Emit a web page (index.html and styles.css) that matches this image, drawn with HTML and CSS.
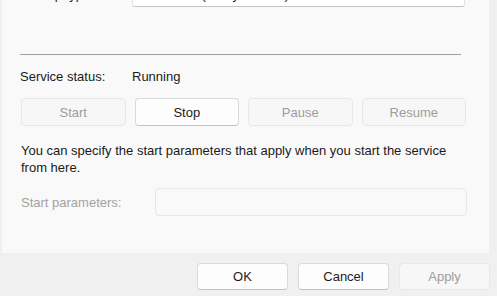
FILE: index.html
```html
<!DOCTYPE html>
<html lang="en">
<head>
<meta charset="utf-8" />
<title>Service Properties</title>
<link rel="stylesheet" href="styles.css">
</head>
<body>
<div class="panel">
  <div class="row top-row">
    <span class="label">Startup type:</span>
    <div class="field combo">Automatic (Delayed Start)</div>
  </div>

  <hr class="separator" />

  <div class="row status-row">
    <span class="label">Service status:</span>
    <span class="value">Running</span>
  </div>

  <div class="service-buttons">
    <button class="btn" disabled>Start</button>
    <button class="btn">Stop</button>
    <button class="btn" disabled>Pause</button>
    <button class="btn" disabled>Resume</button>
  </div>

  <p class="hint">You can specify the start parameters that apply when you start the service from here.</p>

  <div class="row params-row">
    <label class="label disabled" for="params">Start parameters:</label>
    <input type="text" id="params" class="field params" disabled />
  </div>
</div>

<div class="footer">
  <button class="btn dialog">OK</button>
  <button class="btn dialog">Cancel</button>
  <button class="btn dialog" disabled>Apply</button>
</div>
</body>
</html>
```

FILE: styles.css
```css
body {
  margin: 0;
  width: 497px;
  height: 296px;
  overflow: hidden;
  background-color: #f0f0f0;
  font-family: "Liberation Sans", Arial, sans-serif;
  font-size: 13px;
  color: #1b1b1b;
}

.panel {
  display: flow-root;
  margin-left: 2px;
  width: 468px;
  height: 253px;
  padding-left: 19px;
  background-color: #f9f9f9;
  box-sizing: content-box;
}

.row {
  display: flex;
  align-items: center;
}

.label {
  width: 112px;
  flex-shrink: 0;
}

.label.disabled {
  width: 134px;
  color: #a3a3a3;
}

.field {
  box-sizing: border-box;
  background-color: #fff;
  border: 1px solid #e3e3e3;
  border-radius: 4px;
  font: inherit;
}

.top-row {
  height: 24px;
  margin-top: -17px;
  margin-left: -1px;
}

.combo {
  width: 333px;
  height: 24px;
  padding: 3px 7px;
  border-bottom-color: #c4c4c4;
  border-radius: 0 0 3px 3px;
  line-height: 16px;
}

.top-row .label {
  line-height: 20px;
}

.separator {
  margin: 47px 0 0 -1px;
  width: 441px;
  height: 0;
  border: none;
  border-top: 1px solid #a0a0a0;
}

.status-row {
  margin: 13px 0 0 -1px;
  height: 16px;
}

.service-buttons {
  display: flex;
  gap: 9px;
  margin-top: 14px;
  width: 445px;
}

.btn {
  box-sizing: border-box;
  height: 28px;
  flex: 1;
  font: inherit;
  color: #1b1b1b;
  background-color: #fdfdfd;
  border: 1px solid #dadada;
  border-bottom-color: #c2c2c2;
  border-radius: 4px;
  padding: 0;
}

.btn:disabled {
  color: #9d9d9d;
  background-color: #f7f7f7;
  border-color: #e8e8e8;
}

.hint {
  margin: 16px 0 0;
  width: 446px;
  line-height: 17px;
}

.params-row {
  margin-top: 12px;
}

.params {
  width: 312px;
  height: 28px;
  background-color: #f9f9f9;
  border-color: #e6e6e6;
}

.footer {
  display: flex;
  gap: 10px;
  padding: 10px 0 0 197px;
}

.btn.dialog {
  flex: none;
  width: 91px;
  height: 27px;
}
```
